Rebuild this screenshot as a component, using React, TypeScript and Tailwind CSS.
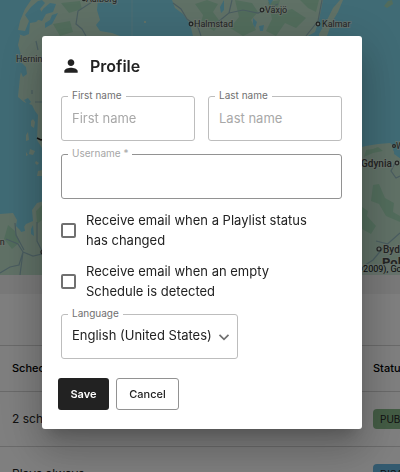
import type { ReactNode } from 'react';

function MapView() {
  return (
    <svg
      className="block h-[275px] w-full bg-[#80d6ea]"
      viewBox="0 0 400 275"
      preserveAspectRatio="xMinYMin slice"
      role="img"
      aria-label="Map of display locations"
    >
      <g fill="#c0e2cd">
        <path d="M31 0 25 9 20 21 18 30 20 36 18 45 21 55 22 66 20 77 18 97 24 102 32 105 35 111 38 115 37 140 42 148 80 150 120 90 120 36 112 33 100 31 96 25 100 20 97 10 98 0Z" />
        <path d="M172 0 175 8 183 14 190 24 193 36 210 80 300 80 308 36 315 32 319 20 323 0Z" />
        <path d="M340 0 333 8 327 20 319 34 319 38 327 36 332 22 338 12 343 0Z" />
        <path d="M384 6 388 1 392 0 393 4 387 8Z" fill="#a4d9b8" />
        <path d="M0 214 13 213 17 220 16 226 21 231 26 224 33 221 32 210 37 203 44 201 80 190 80 275 0 275Z" />
        <path d="M350 150 366 146 378 144 390 143 394 146 393 150 397 156 400 158 400 275 350 275Z" />
        <path d="M33 119 35 122 34 128 31 126 31 121Z M28 132 29 140 26 141 26 135Z M30 149 35 151 33 155 29 154Z M26 152 28 155 26 156Z M36 161 39 163 37 165 35 163Z M38 171 42 170 42 176 37 176Z" />
        <path d="M144 21h2v2h-2z" />
      </g>
      <g fill="#a4d9b8">
        <path d="M195 4 207 0 218 4 213 12 221 23 214 31 201 23 203 15Z" />
        <path d="M235 0 252 3 258 12 251 20 256 30 243 36 230 28 239 17Z" />
        <path d="M268 2 280 0 276 13 292 9 306 18 296 28 285 23 276 36 266 31 272 19Z" />
        <path d="M300 0 319 0 316 12 308 8Z" />
        <path d="M373 185 379 184 385 198 394 203 393 212 400 216 400 222 386 216 379 204 371 201Z" />
        <path d="M362 207 368 211 367 216 376 226 371 234 362 229Z" />
        <path d="M366 150 373 149 378 147 383 151 373 153 364 157Z" />
        <path d="M8 225 15 231 20 242 12 249 4 239Z M36 211 42 205 42 220 37 224Z" />
        <path d="M61 3 80 1 82 9 69 13Z M53 24 70 21 73 32 60 36Z" />
      </g>
      <g fill="#80d6ea">
        <path d="M18 30 25 31 29 21 25 15 31 7 38 1 42 0 45 3 40 9 43 15 36 22 30 23 29 34 24 36 18 34Z" />
        <path d="M44 8 50 3 56 4 53 12 46 14 42 21 36 19Z" />
        <path d="M45 23 50 20 52 15 58 13 52 24 45 28Z" />
        <path d="M21 62 26 67 27 74 23 77 20 70Z M24 100 28 98 31 102 28 105Z" />
        <path d="M220 7 224 0 224 10 221 13Z M253 18 257 22 255 28 253 24Z M259 26 264 25 263 31 260 31Z M268 0 273 0 270 5Z" />
        <path d="M31 229 33 225 34 236 31 234Z M17 222 23 220 25 231 21 232Z" />
        <path d="M395 145 400 151 400 158 394 154Z" />
      </g>
      <g fill="none" stroke="#94b9c0" strokeWidth="1.2">
        <path d="M95 0 78 11 76 24 82 29 86 36" />
        <path d="M173 3 181 9 187 19 198 27 201 36" />
        <path d="M232 0 229 13 218 22 207 24M229 13 243 10 258 13 278 4M322 0 318 21 310 31 306 36" />
        <path d="M36 41 38 50M32 90 32 94M35 102 42 102" />
        <path d="M0 273 10 267 19 265 23 252 33 256 42 254M6 239 18 244 23 252M15 223 16 235 24 250M37 222 37 241 42 251M23 252 20 275" />
        <path d="M362 267 373 260 383 248 400 233M376 241 388 244M395 163 391 171 396 178 400 176" />
      </g>
      <path d="M132 0V40" stroke="#9adae7" />
      <path d="M37 138 41 140 44 139" fill="none" stroke="#222222" strokeWidth="1.5" />
      <g className="font-['Roboto',sans-serif] text-[9px]" fill="#484848" stroke="#d7e8da" strokeWidth="2" strokeOpacity="0.7" paintOrder="stroke">
        <text x="86" y="2">Aalborg</text>
        <text x="194" y="27">Halmstad</text>
        <text x="265" y="13">Växjö</text>
        <text x="322" y="27">Kalmar</text>
        <text x="16" y="62">Herning</text>
        <text x="-5" y="245">en</text>
        <text x="396" y="149">Władysławowo</text>
        <text x="361" y="167" className="text-[10px] font-medium">Gdynia</text>
        <text x="383" y="253" className="text-[10px] font-medium">Bydgoszcz</text>
        <text x="382" y="267" className="text-[13px] font-bold">Poland</text>
      </g>
      <g fill="#d7e8da" stroke="#484848" strokeWidth="1.2">
        <circle cx="84" cy="-1" r="1.6" />
        <circle cx="191" cy="24" r="1.8" />
        <circle cx="262" cy="10" r="1.8" />
        <circle cx="318" cy="24" r="1.8" />
        <circle cx="394" cy="146" r="1.4" />
        <circle cx="397" cy="163" r="1.8" />
        <circle cx="379" cy="249" r="2" />
        <circle cx="43" cy="252" r="2" />
      </g>
      <path d="M200 264H400V275H200Z" fill="#cfe6d9" />
      <text x="356" y="272" className="font-['Roboto',sans-serif] text-[9px]" fill="#111111">
        ©2009), Google
      </text>
    </svg>
  );
}

function ScheduleTable() {
  return (
    <table className="w-full table-fixed border-collapse text-left text-black">
      <thead>
        <tr className="h-[46px] border-y border-[#d4d4d4] text-[11px]">
          <th className="w-[373px] pl-3 font-medium">Schedule</th>
          <th className="font-medium">Status</th>
        </tr>
      </thead>
      <tbody className="text-xs text-[#222222]">
        <tr className="h-[55px] border-b border-[#d4d4d4]">
          <td className="pl-3">2 schedules</td>
          <td className="overflow-hidden">
            <span className="block h-5 w-fit rounded-sm bg-[#88b98a] px-[7px] text-[10px] leading-5">PUBLISHED</span>
          </td>
        </tr>
        <tr className="h-[55px]">
          <td className="pl-3">Plays always</td>
          <td className="overflow-hidden">
            <span className="block h-5 w-fit rounded-sm bg-[#67b5df] px-[7px] text-[10px] leading-5">DISABLED</span>
          </td>
        </tr>
      </tbody>
    </table>
  );
}

type FieldProps = { id: string; label: string; muted?: boolean; children: ReactNode };

function Field({ id, label, muted, children }: FieldProps) {
  return (
    <div className="relative">
      {children}
      <label
        htmlFor={id}
        className={`absolute -top-[7px] left-[7px] bg-white px-1 text-[10px] leading-3 ${muted ? 'text-[#a6a6a6]' : 'text-[#707070]'}`}
      >
        {label}
      </label>
    </div>
  );
}

const control =
  'block h-[45px] w-full rounded-[3px] border bg-white px-2.5 pb-0.5 text-[13px] text-[#222222] outline-none placeholder:text-[#a8a8a8]';

function CheckRow({ id, children }: { id: string; children: ReactNode }) {
  return (
    <div className="flex items-center gap-2.5 pr-5">
      <input
        id={id}
        type="checkbox"
        className="size-[15px] shrink-0 appearance-none rounded-xs border-2 border-[#707070] bg-white checked:bg-[#222222]"
      />
      <label htmlFor={id} className="text-[13px] leading-5 text-[#222222]">
        {children}
      </label>
    </div>
  );
}

function ProfileDialog() {
  return (
    <div
      role="dialog"
      aria-labelledby="profile-title"
      className="w-full max-w-lg rounded-[3px] bg-white py-[19px] pr-5 pl-4 shadow-[0_11px_15px_-7px_rgba(0,0,0,0.2),0_24px_38px_3px_rgba(0,0,0,0.14),0_9px_46px_8px_rgba(0,0,0,0.12)]"
    >
      <form onSubmit={(e) => e.preventDefault()}>
        <div className="pl-[3px]">
          <div className="flex h-[22px] items-center gap-[9px]">
            <svg className="size-5 fill-[#222222]" viewBox="0 0 24 24" aria-hidden="true">
              <path d="M12 12c2.21 0 4-1.79 4-4s-1.79-4-4-4-4 1.79-4 4 1.79 4 4 4m0 2c-2.67 0-8 1.34-8 4v2h16v-2c0-2.66-5.33-4-8-4" />
            </svg>
            <h2 id="profile-title" className="text-base font-semibold text-[#222222]">
              Profile
            </h2>
          </div>
          <div className="mt-[19px] grid grid-cols-2 gap-[13px]">
            <Field id="first" label="First name">
              <input id="first" placeholder="First name" className={`${control} border-[#bdbdbd]`} />
            </Field>
            <Field id="last" label="Last name">
              <input id="last" placeholder="Last name" className={`${control} border-[#bdbdbd]`} />
            </Field>
            <div className="col-span-2">
              <Field id="username" label="Username *" muted>
                <input id="username" required className={`${control} border-[#929292]`} />
              </Field>
            </div>
          </div>
          <div className="mt-[11px] mb-[13px] flex flex-col gap-[11px]">
            <CheckRow id="playlist">Receive email when a Playlist status has changed</CheckRow>
            <CheckRow id="empty">Receive email when an empty Schedule is detected</CheckRow>
          </div>
          <div className="w-[177px]">
            <Field id="language" label="Language">
              <select id="language" className={`${control} appearance-none border-[#bdbdbd]`}>
                <option>English (United States)</option>
              </select>
              <svg
                className="pointer-events-none absolute top-[17px] right-2 size-3 fill-none stroke-[#707070]"
                viewBox="0 0 12 12"
                aria-hidden="true"
              >
                <path d="M1.5 3.8l4.5 4.5 4.5-4.5" strokeWidth="1.7" />
              </svg>
            </Field>
          </div>
        </div>
        <div className="mt-[19px] flex gap-[7px] text-[11px]">
          <button type="submit" className="h-8 w-[51px] rounded-[3px] bg-[#222222] font-semibold text-white">
            Save
          </button>
          <button type="button" className="h-8 w-[63px] rounded-[3px] border border-[#929292] font-medium text-[#222222]">
            Cancel
          </button>
        </div>
      </form>
    </div>
  );
}

export default function App() {
  return (
    <div className="h-screen overflow-hidden bg-white font-['Inter',sans-serif]">
      <MapView />
      <div className="h-[19px] bg-[#f3f3f3]" />
      <div className="pt-[51px]">
        <ScheduleTable />
      </div>
      <div className="fixed inset-0 flex items-start justify-center overflow-hidden bg-black/50 pt-9 pr-[38px] pl-[42px]">
        <ProfileDialog />
      </div>
    </div>
  );
}
